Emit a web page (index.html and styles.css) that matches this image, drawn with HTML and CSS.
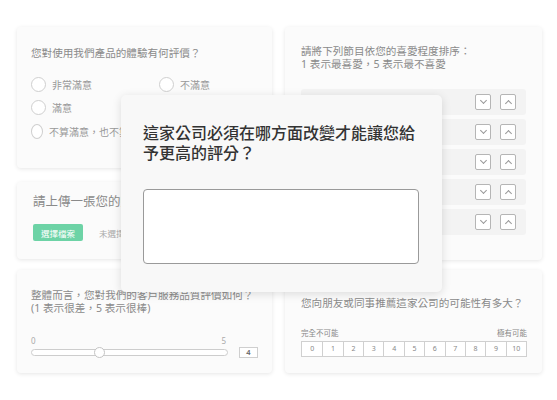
FILE: index.html
```html
<!DOCTYPE html>
<html lang="zh-Hant">

<head>
  <meta charset="UTF-8">
  <meta name="viewport" content="width=device-width, initial-scale=1.0">
  <title>問卷範例</title>
  <link rel="stylesheet" href="styles.css">
</head>

<body>
  <div class="board">
    <div class="col">
      <!-- 單選題 -->
      <section class="card card-choice">
        <p class="question">您對使用我們產品的體驗有何評價？</p>
        <div class="options">
          <label class="option"><span class="radio"></span>非常滿意</label>
          <label class="option"><span class="radio"></span>滿意</label>
          <label class="option"><span class="radio"></span>不算滿意，也不算不滿意</label>
          <label class="option"><span class="radio"></span>不滿意</label>
          <label class="option"><span class="radio"></span>非常不滿意</label>
        </div>
      </section>

      <!-- 上傳 -->
      <section class="card card-upload">
        <p class="question big">請上傳一張您的照片</p>
        <div class="upload-row">
          <button class="file-btn">選擇檔案</button>
          <span class="file-name">未選擇任何檔案</span>
        </div>
      </section>

      <!-- 滑桿 -->
      <section class="card card-scale">
        <p class="question">整體而言，您對我們的客戶服務品質評價如何？<br>(1 表示很差，5 表示很棒)</p>
        <div class="scale">
          <div class="scale-main">
            <div class="scale-labels"><span>0</span><span>5</span></div>
            <div class="track"><span class="thumb"></span></div>
          </div>
          <span class="scale-value">4</span>
        </div>
      </section>
    </div>

    <div class="col">
      <!-- 排序題 -->
      <section class="card card-rank">
        <p class="question">請將下列節目依您的喜愛程度排序：<br>1 表示最喜愛，5 表示最不喜愛</p>
        <ul class="rank-list">
          <li class="rank-row"><button class="arrow down"></button><button class="arrow up"></button></li>
          <li class="rank-row"><button class="arrow down"></button><button class="arrow up"></button></li>
          <li class="rank-row"><button class="arrow down"></button><button class="arrow up"></button></li>
          <li class="rank-row"><button class="arrow down"></button><button class="arrow up"></button></li>
          <li class="rank-row"><button class="arrow down"></button><button class="arrow up"></button></li>
        </ul>
      </section>

      <!-- NPS -->
      <section class="card card-nps">
        <p class="question">您向朋友或同事推薦這家公司的可能性有多大？</p>
        <div class="nps-labels"><span>完全不可能</span><span>極有可能</span></div>
        <div class="nps">
          <span>0</span><span>1</span><span>2</span><span>3</span><span>4</span><span>5</span>
          <span>6</span><span>7</span><span>8</span><span>9</span><span>10</span>
        </div>
      </section>
    </div>

    <!-- 浮在上面的開放式問題 -->
    <div class="modal">
      <h2 class="modal-title">這家公司必須在哪方面改變才能讓您給予更高的評分？</h2>
      <textarea class="modal-input"></textarea>
    </div>
  </div>
</body>

</html>
```

FILE: styles.css
```css
* {
  box-sizing: border-box;
}

body {
  margin: 0;
  background: #fff;
  font-family: "Noto Sans", "Noto Sans CJK TC", sans-serif;
  color: #8a8a8a;
}

.board {
  position: relative;
  width: 557px;
  height: 400px;
  padding: 27px 15px 0 17px;
  display: grid;
  grid-template-columns: 255px 257px;
  column-gap: 13px;
  align-items: start;
}

.col {
  display: flex;
  flex-direction: column;
}

.card {
  background: #fbfbfb;
  border-radius: 4px;
  box-shadow: 0 1px 4px rgba(0, 0, 0, 0.1);
  padding: 18px 14px 0;
}

.question {
  margin: 0;
  font-size: 10.6px;
  line-height: 12.5px;
  color: #8a8a8a;
}

.question.big {
  font-size: 12.5px;
  line-height: 16px;
}

/* 單選題 */
.card-choice {
  height: 141px;
  padding-top: 20px;
}

.options {
  display: grid;
  grid-template-columns: 128px 1fr;
  grid-template-rows: 23px 24px 24px;
  grid-auto-flow: column;
  margin-top: 13px;
}

.option {
  display: flex;
  align-items: center;
  gap: 6px;
  font-size: 10px;
  color: #999;
  white-space: nowrap;
}

.radio {
  width: 15px;
  height: 15px;
  border: 1px solid #cfcfcf;
  border-radius: 50%;
  background: #fff;
}

/* 上傳 */
.card-upload {
  height: 77px;
  margin-top: 14px;
  padding-top: 12px;
  padding-left: 16px;
}

.upload-row {
  display: flex;
  align-items: center;
  gap: 16px;
  margin-top: 14px;
}

.file-btn {
  width: 50px;
  height: 17px;
  border: none;
  border-radius: 2px;
  background: #6dd3a6;
  color: #fff;
  font-family: inherit;
  font-size: 8.5px;
  padding: 0;
}

.file-name {
  font-size: 8.5px;
  color: #aaa;
}

/* 滑桿 */
.card-scale {
  height: 103px;
  margin-top: 11px;
  padding-top: 19px;
}

.scale {
  display: flex;
  align-items: flex-end;
  gap: 11px;
  margin-top: 22px;
}

.scale-main {
  width: 197px;
}

.scale-labels {
  display: flex;
  justify-content: space-between;
  font-size: 8px;
  line-height: 10px;
  color: #aaa;
  padding-right: 2px;
}

.track {
  position: relative;
  height: 7px;
  margin-top: 3px;
  border: 1px solid #cdcdcd;
  border-radius: 4px;
  background: #fff;
}

.thumb {
  position: absolute;
  left: 62px;
  top: -3px;
  width: 11px;
  height: 11px;
  border: 1px solid #c4c4c4;
  border-radius: 50%;
  background: #fff;
}

.scale-value {
  width: 19px;
  height: 11px;
  margin-bottom: -2px;
  border: 1px solid #cfcfcf;
  background: #fff;
  font-size: 7.5px;
  line-height: 9px;
  text-align: center;
  color: #666;
  font-weight: 600;
}

/* 排序題 */
.card-rank {
  height: 233px;
  padding-left: 16px;
  padding-right: 16px;
}

.rank-list {
  list-style: none;
  margin: 19px 0 0;
  padding: 0;
  display: flex;
  flex-direction: column;
  gap: 4px;
}

.rank-row {
  height: 26px;
  display: flex;
  align-items: center;
  justify-content: flex-end;
  gap: 9px;
  padding: 0 10px 0 8px;
  background: #f3f3f3;
  border-radius: 3px;
}

.arrow {
  position: relative;
  width: 16px;
  height: 16px;
  padding: 0;
  border: 1px solid #b5b5b5;
  border-radius: 2px;
  background: #fff;
}

.arrow::after {
  content: "";
  position: absolute;
  left: 5px;
  width: 4px;
  height: 4px;
  border-right: 1px solid #999;
  border-bottom: 1px solid #999;
}

.arrow.down::after {
  top: 3px;
  transform: rotate(45deg);
}

.arrow.up::after {
  top: 6px;
  transform: rotate(-135deg);
}

/* NPS */
.card-nps {
  height: 103px;
  margin-top: 10px;
  padding-top: 27px;
  padding-left: 16px;
  padding-right: 15px;
}

.nps-labels {
  display: flex;
  justify-content: space-between;
  margin-top: 18px;
  font-size: 7.5px;
  line-height: 10px;
  color: #888;
}

.nps {
  display: grid;
  grid-template-columns: repeat(11, 1fr);
  height: 16px;
  margin-top: 3px;
  border: 1px solid #d0d0d0;
  background: #fff;
}

.nps span {
  border-left: 1px solid #d0d0d0;
  font-size: 7px;
  line-height: 14px;
  text-align: center;
  color: #888;
}

.nps span:first-child {
  border-left: none;
}

/* 浮層 */
.modal {
  position: absolute;
  left: 121px;
  top: 95px;
  width: 321px;
  height: 197px;
  padding: 28px 22px 0;
  background: #f8f8f8;
  border-radius: 5px;
  box-shadow: 0 2px 10px rgba(0, 0, 0, 0.13);
}

.modal-title {
  margin: 0;
  font-size: 16px;
  line-height: 20px;
  font-weight: 500;
  color: #333;
}

.modal-input {
  display: block;
  width: 276px;
  height: 75px;
  margin-top: 26px;
  border: 1px solid #9a9a9a;
  border-radius: 4px;
  background: #fff;
  resize: none;
}
```
